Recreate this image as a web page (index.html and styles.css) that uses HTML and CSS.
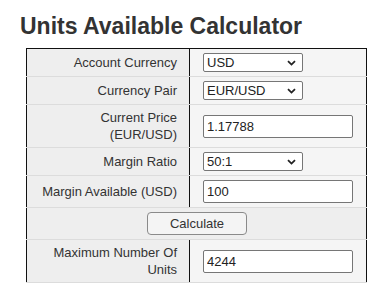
FILE: index.html
```html
<!DOCTYPE html>
<html>
<head>
	<title>Units Available Calculator</title>
	<link rel="stylesheet" href="styles.css">
</head>
<body>
	<div class="page">
	    <h1 class="title">Units Available Calculator</h1>
	    <table class="calc">
	        <colgroup>
	            <col class="col-label">
	            <col class="col-field">
	        </colgroup>
	        <tr>
	            <td class="label">Account Currency</td>
	            <td class="field">
	                <span class="select-wrap">
	                    <select class="select"><option>USD</option></select>
	                    <svg class="chevron" width="9" height="6" viewBox="0 0 9 6"><path d="M1 1.2 L4.5 4.6 L8 1.2" fill="none" stroke="#222" stroke-width="1.8"/></svg>
	                </span>
	            </td>
	        </tr>
	        <tr>
	            <td class="label">Currency Pair</td>
	            <td class="field">
	                <span class="select-wrap">
	                    <select class="select"><option>EUR/USD</option></select>
	                    <svg class="chevron" width="9" height="6" viewBox="0 0 9 6"><path d="M1 1.2 L4.5 4.6 L8 1.2" fill="none" stroke="#222" stroke-width="1.8"/></svg>
	                </span>
	            </td>
	        </tr>
	        <tr>
	            <td class="label">Current Price (EUR/USD)</td>
	            <td class="field"><input type="text" class="input" value="1.17788"></td>
	        </tr>
	        <tr>
	            <td class="label">Margin Ratio</td>
	            <td class="field">
	                <span class="select-wrap">
	                    <select class="select"><option>50:1</option></select>
	                    <svg class="chevron" width="9" height="6" viewBox="0 0 9 6"><path d="M1 1.2 L4.5 4.6 L8 1.2" fill="none" stroke="#222" stroke-width="1.8"/></svg>
	                </span>
	            </td>
	        </tr>
	        <tr>
	            <td class="label">Margin Available (USD)</td>
	            <td class="field"><input type="text" class="input" value="100"></td>
	        </tr>
	        <tr>
	            <td class="action" colspan="2"><button class="button">Calculate</button></td>
	        </tr>
	        <tr>
	            <td class="label">Maximum Number Of Units</td>
	            <td class="field"><input type="text" class="input" value="4244"></td>
	        </tr>
	    </table>
	</div>
</body>
</html>
```

FILE: styles.css
```css
* {
	box-sizing: border-box;
}

body {
    margin: 0;
    background-color: #fff;
    font-family: "Liberation Sans", Arial, sans-serif;
    color: #333;
}

.page {
    padding: 12px 0 0 20px;
}

.title {
    margin: 0 0 8px 0;
    font-size: 23px;
    line-height: 28px;
    font-weight: bold;
    color: #333;
}

.calc {
    margin-left: 6px;
    width: 340px;
    table-layout: fixed;
    border-collapse: collapse;
    font-size: 13px;
    line-height: 17px;
}

.col-label {
    width: 163px;
}

.col-field {
    width: 177px;
}

.calc td {
    padding: 4px 12px 4px 13px;
    border-bottom: 1px solid #dcdcdc;
    vertical-align: middle;
}

.calc tr:first-child td {
    border-top: 1px solid #111;
}

.label {
    text-align: right;
    background: #eee;
    border-left: 1px solid #111;
    border-right: 1px solid #111;
}

.field {
    background: #f5f5f5;
    border-right: 1px solid #111;
}

.action {
    text-align: center;
    background: #eee;
    border-left: 1px solid #111;
    border-right: 1px solid #111;
}

.select-wrap {
    position: relative;
    display: inline-block;
    vertical-align: middle;
}

.select {
    -webkit-appearance: none;
    appearance: none;
    display: block;
    width: 100px;
    height: 19px;
    margin: 0;
    padding: 0 0 0 3px;
    border: 1px solid #767676;
    border-radius: 2px;
    background: #fff;
    font-family: "Liberation Sans", Arial, sans-serif;
    font-size: 13px;
    color: #222;
}

.chevron {
    position: absolute;
    right: 7px;
    top: 7px;
    pointer-events: none;
}

.input {
    display: block;
    width: 150px;
    height: 23px;
    margin: 0;
    padding: 0 3px;
    border: 1px solid #767676;
    border-radius: 2px;
    background: #fff;
    font-family: "Liberation Sans", Arial, sans-serif;
    font-size: 13px;
    color: #222;
}

.button {
    width: 100px;
    height: 23px;
    margin: 0;
    padding: 0;
    border: 1px solid #8a8a8a;
    border-radius: 4px;
    background: #f4f4f4;
    font-family: "Liberation Sans", Arial, sans-serif;
    font-size: 13px;
    color: #333;
    vertical-align: middle;
}
```
